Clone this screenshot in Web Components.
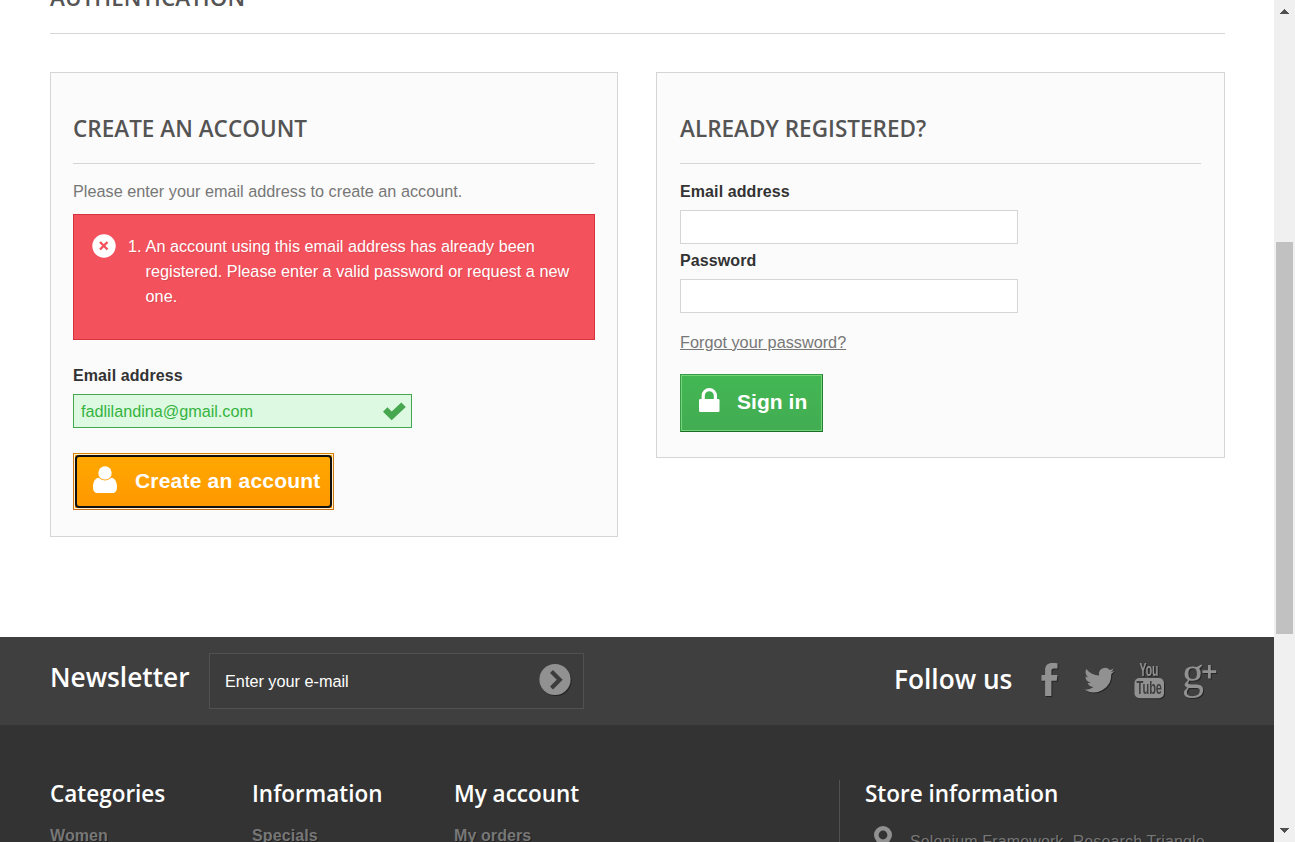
<!DOCTYPE html>
<html lang="en"><head><meta charset="utf-8"><title>Authentication</title>
<style>
html,body{margin:0;height:100%;overflow:hidden;background:#fff}
body{font:16.25px/22px "Liberation Sans",Arial,sans-serif;color:#777}
</style></head><body>
<auth-page></auth-page>
<script>
const define=(name,html)=>{
  const t=document.createElement('template');t.innerHTML=html;
  customElements.define(name,class extends HTMLElement{
    constructor(){super();this.attachShadow({mode:'open'}).append(t.content.cloneNode(true));}
  });
};

define('page-scrollbar',`<style>
:host{display:flex;flex-direction:column;align-items:center;background:#f0f0f0;width:21px;height:842px;justify-content:space-between;box-sizing:border-box;padding:9px 0 9px}
.track{flex:1;width:17px;margin-top:228px}
.thumb{height:392px;background:#c1c1c1}
svg{display:block;flex:none}
</style><svg width="9" height="5" shape-rendering="crispEdges"><path d="M0 5h9L4.5 0z" fill="#505050"/></svg>
<div class="track"><div class="thumb"></div></div>
<svg width="9" height="5" shape-rendering="crispEdges"><path d="M0 0h9L4.5 5z" fill="#505050"/></svg>`);

define('form-card',`<style>
:host{display:block;box-sizing:border-box;border:1px solid #d6d4d4;background:#fbfbfb;padding:42px 22px 0}
h3{margin:0 0 16px;font:600 22.5px/27px "Open Sans",sans-serif;color:#555454;border-bottom:1px solid #d6d4d4;padding-bottom:21px;white-space:nowrap;letter-spacing:.02px}
</style><h3><slot name="title"></slot></h3><slot></slot>`);

define('text-field',`<style>
:host{display:block}
label{display:block;color:#333;font-weight:700;font-size:16px;line-height:22px;letter-spacing:.1px;padding-top:1px}
.box{box-sizing:border-box;width:var(--field-width,339px);height:34px;margin-top:7px;border:1px solid #d6d4d4;background:#fff;display:flex;align-items:center;justify-content:space-between;padding:0 5px 0 7px;color:#35b33f;letter-spacing:-.04px}
:host([valid]) .box{border-color:#46a74e;background:#ddf9e1}
svg{display:none}
:host([valid]) svg{display:block}
</style><label><slot name="label"></slot></label>
<div class="box"><span><slot></slot></span><svg width="23" height="19" viewBox="0 0 23 19"><path d="M0 9.7 4.4 5.3 8.7 9.4 18.3.5 22.8 5 8.7 18.2z" fill="#46a74e"/></svg></div>`);

define('error-notice',`<style>
:host{display:flex;box-sizing:border-box;height:126px;margin-top:12px;border:1px solid #d4323d;background:#f3515c;color:#fff;padding:19px 18px 0;text-shadow:1px 1px rgba(0,0,0,.1)}
svg{display:block;flex:none}
ol{list-style:none;margin:0 0 0 12px;padding:0;line-height:25px}
li{display:flex;gap:4px}
.body{white-space:nowrap}
</style><svg width="24" height="24"><circle cx="12" cy="12" r="11.7" fill="#fff"/><path d="m8 8 7.5 7.5m0-7.5L8 15.5" stroke="#f3515c" stroke-width="2.4"/></svg>
<ol><li><span>1.</span><span class="body"><slot></slot></span></li></ol>`);

define('action-button',`<style>
:host{display:block}
button{display:flex;align-items:center;box-sizing:border-box;margin:0;border:1px solid;color:#fff;font:700 21px/27px "Liberation Sans",Arial,sans-serif;letter-spacing:.2px;white-space:nowrap;border-radius:0;outline:0}
.label{padding-top:2px}
:host([kind=go]) button{width:143px;height:58px;padding:0 0 6px 18px;gap:17px;letter-spacing:.05px;border-color:#399a49 #247f32 #1a6d27 #399a49;background:linear-gradient(#43b754,#42ac52);box-shadow:inset 0 0 0 1px #74d578}
:host([kind=new]) button{width:261px;height:57px;padding:0 0 5px 19px;gap:18px;border-color:#d98305 #cf760d #ca6d12;background:linear-gradient(#ffa900,#ff9700);box-shadow:inset 0 0 0 1px #fff0d2;position:relative}
:host([kind=new]) button::after{content:"";position:absolute;inset:1px;border:2px solid #101010;border-radius:4px}
</style><button><slot name="icon"></slot><span class="label"><slot></slot></span></button>`);

define('newsletter-bar',`<style>
:host{display:flex;box-sizing:border-box;height:88px;background:#3f3f3f;padding:0 49px 0 50px;color:#fff;justify-content:space-between}
.group{display:flex}
h4{margin:0;font:600 26.25px/31px "Open Sans",sans-serif;white-space:nowrap}
.news h4{width:159px;padding-top:25px}
.field{box-sizing:border-box;width:375px;height:56px;margin-top:16px;border:1px solid #515151;background:#3c3c3c;display:flex;justify-content:space-between;align-items:center;padding:0 12px 3px 15px}
.field span{padding-top:3px}
.follow h4{width:147px;padding-top:27px}
svg{display:block;overflow:visible}
.icons{padding-top:24px}
.shadow{filter:drop-shadow(1px 1px 0 rgba(0,0,0,.4))}
</style>
<div class="group news"><h4>Newsletter</h4><div class="field"><span>Enter your e-mail</span>
<svg class="shadow" width="32" height="32"><circle cx="16" cy="15.5" r="15.6" fill="#919191"/><path d="m12.5 7.5 8.2 8.2-8.2 8.2" fill="none" stroke="#3c3c3c" stroke-width="4.2"/></svg></div></div>
<div class="group follow"><h4>Follow us</h4><div class="icons">
<svg class="shadow" width="184" height="40" fill="#919191">
<path d="M16.5 2.2v5.4h-3.4c-2.3 0-2.7 1-2.7 2.7v3.6h6.1l-.8 5.8h-5.3V35H4.1V19.7H.5v-5.8h3.6V9.2C4.1 4.4 6.8 2 11.3 2c2.4 0 4.2.1 5.2.2z"/>
<path transform="translate(43.2 4) scale(1.26)" d="M24 4.6a10 10 0 0 1-2.8.8 5 5 0 0 0 2.2-2.7c-1 .5-2 1-3.1 1.2a4.9 4.9 0 0 0-8.4 4.5A14 14 0 0 1 1.7 3.2a4.9 4.9 0 0 0 1.5 6.5 5 5 0 0 1-2.2-.6v.1a5 5 0 0 0 4 4.8 5 5 0 0 1-2.3.1 5 5 0 0 0 4.6 3.4A9.9 9.9 0 0 1 0 19.5a14 14 0 0 0 21.5-12.4A10 10 0 0 0 24 4.6z"/>
<rect x="93.5" y="17" width="29.5" height="20.3" rx="5"/>
<text x="98.5" y="15" font-family="Liberation Sans" font-weight="700" font-size="18" textLength="19" lengthAdjust="spacingAndGlyphs">You</text>
<text x="95.5" y="33" font-family="Liberation Sans" font-weight="700" font-size="18" fill="#3f3f3f" textLength="25.5" lengthAdjust="spacingAndGlyphs">Tube</text>
<text x="141" y="27" font-family="Liberation Serif" font-size="47" textLength="22" lengthAdjust="spacingAndGlyphs">g</text>
<path d="M161.5 9.3h5.5V4h2.8v5.3h5.4v2.8h-5.4v5.4H167v-5.4h-5.5z"/>
</svg></div></div>`);

define('footer-column',`<style>
:host{display:block}
h4{margin:0;font:600 22.5px/27px "Open Sans",sans-serif;color:#fff;white-space:nowrap}
div{margin-top:18px;font-weight:700;font-size:16px;line-height:22px;letter-spacing:.1px;white-space:nowrap;text-shadow:1px 1px rgba(0,0,0,.4)}
:host([plain]) div{font-weight:400;display:flex;margin-top:15px}
</style><h4><slot name="title"></slot></h4><div><slot></slot></div>`);

define('site-footer',`<style>
:host{display:grid;grid-template-columns:202px 202px 385px 1fr;box-sizing:border-box;height:117px;background:#333;padding:55px 50px 0;overflow:hidden}
.store{border-left:1px solid #515151;padding-left:25px;height:62px}
svg{width:18px;height:26px;margin:4px 18px 0 9px;flex:none}
.addr{padding-top:9px;letter-spacing:.13px}
</style>
<footer-column><span slot="title">Categories</span>Women</footer-column>
<footer-column><span slot="title">Information</span>Specials</footer-column>
<footer-column><span slot="title">My account</span>My orders</footer-column>
<footer-column class="store" plain><span slot="title">Store information</span><svg viewBox="0 0 18 26"><path fill-rule="evenodd" d="M9 0a9 9 0 0 0-9 9c0 4 5 9 9 17 4-8 9-13 9-17a9 9 0 0 0-9-9zm0 4.6a4.4 4.4 0 1 1 0 8.8 4.4 4.4 0 0 1 0-8.8z" fill="#919191"/></svg><span class="addr">Selenium Framework, Research Triangle</span></footer-column>`);

define('auth-page',`<style>
:host{display:flex;width:1295px;height:842px;overflow:hidden}
main{width:1274px;flex:none;display:flex;flex-direction:column}
.content{height:637px;box-sizing:border-box;padding:0 49px 0 50px;overflow:hidden}
h1{margin:-16px 0 0;font:600 22.5px/27px "Open Sans",sans-serif;color:#555454;border-bottom:1px solid #d6d4d4;padding-bottom:22px}
.cards{display:grid;grid-template-columns:568px 569px;gap:38px;margin-top:38px;align-items:start}
.create{height:465px}.login{height:386px;padding-left:23px;padding-right:23px;--field-width:338px}
p{margin:0}
.mail{margin:24px 0 25px}
.pass{margin-top:5px}
.forgot{margin:18px 0 21px;text-decoration:underline}
svg{display:block;flex:none}
</style>
<main><section class="content"><h1>AUTHENTICATION</h1>
<div class="cards">
<form-card class="create"><span slot="title">CREATE AN ACCOUNT</span>
<p>Please enter your email address to create an account.</p>
<error-notice>An account using this email address has already been<br>registered. Please enter a valid password or request a new<br>one.</error-notice>
<text-field class="mail" valid><span slot="label">Email address</span>fadlilandina@gmail.com</text-field>
<action-button kind="new"><svg slot="icon" width="24" height="27" viewBox="0 0 24 27" fill="#fff"><circle cx="12" cy="6.9" r="6.7"/><path d="M5.8 11.8C2 12 0 16 0 21c0 4 1.7 6 4.8 6h14.4c3.1 0 4.8-2 4.8-6 0-5-2-9-5.8-9.2a8.7 8.7 0 0 1-12.4 0z"/></svg>Create an account</action-button>
</form-card>
<form-card class="login"><span slot="title">ALREADY REGISTERED?</span>
<text-field><span slot="label">Email address</span></text-field>
<text-field class="pass"><span slot="label">Password</span></text-field>
<p class="forgot">Forgot your password?</p>
<action-button kind="go"><svg slot="icon" width="21" height="24" viewBox="0 0 21 24"><path fill="none" stroke="#fff" stroke-width="3.2" d="M4.2 12V7.7a6.1 6.1 0 0 1 12.2 0V12"/><rect y="11" width="20.5" height="13" rx="1.2" fill="#fff"/></svg>Sign in</action-button>
</form-card></div></section>
<newsletter-bar></newsletter-bar><site-footer></site-footer></main>
<page-scrollbar></page-scrollbar>`);
</script></body></html>
